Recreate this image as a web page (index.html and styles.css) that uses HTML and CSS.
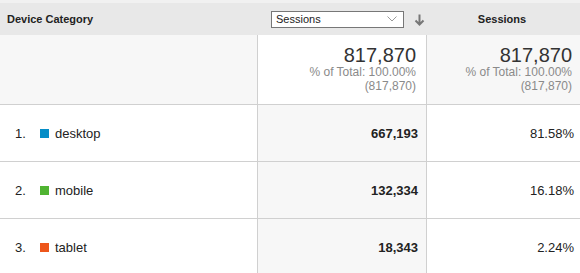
FILE: index.html
```html
<!DOCTYPE html>
<html>
<head>
<meta charset="utf-8">
<link rel="stylesheet" href="styles.css">
</head>
<body>
<div class="table">
  <div class="row head">
    <div class="cell c1"><span class="hlabel">Device Category</span></div>
    <div class="cell c2">
      <div class="select"><span>Sessions</span>
        <svg class="chev" width="10" height="6" viewBox="0 0 10 6"><polyline points="0.5,0.5 5,5 9.5,0.5" fill="none" stroke="#9a9a9a" stroke-width="1"/></svg>
      </div>
      <svg class="sortarrow" width="11" height="12" viewBox="0 0 11 12"><path d="M5.5 0.5 V10.5 M1.5 6.5 L5.5 10.5 L9.5 6.5" fill="none" stroke="#777" stroke-width="2"/></svg>
    </div>
    <div class="cell c3"><span class="hlabel">Sessions</span></div>
  </div>
  <div class="row total">
    <div class="cell c1"></div>
    <div class="cell c2">
      <div class="big">817,870</div>
      <div class="small">% of Total: 100.00%</div>
      <div class="small">(817,870)</div>
    </div>
    <div class="cell c3">
      <div class="big">817,870</div>
      <div class="small">% of Total: 100.00%</div>
      <div class="small">(817,870)</div>
    </div>
  </div>
  <div class="row data">
    <div class="cell c1"><span class="idx">1.</span><span class="sw sw-desktop"></span><span class="name">desktop</span></div>
    <div class="cell c2"><b>667,193</b></div>
    <div class="cell c3">81.58%</div>
  </div>
  <div class="row data">
    <div class="cell c1"><span class="idx">2.</span><span class="sw sw-mobile"></span><span class="name">mobile</span></div>
    <div class="cell c2"><b>132,334</b></div>
    <div class="cell c3">16.18%</div>
  </div>
  <div class="row data">
    <div class="cell c1"><span class="idx">3.</span><span class="sw sw-tablet"></span><span class="name">tablet</span></div>
    <div class="cell c2"><b>18,343</b></div>
    <div class="cell c3">2.24%</div>
  </div>
</div>
</body>
</html>
```
FILE: styles.css
```css
html, body {
  margin: 0;
  padding: 0;
  background: #fff;
}
body {
  font-family: "Liberation Sans", Arial, sans-serif;
  color: #222;
}
.table {
  width: 580px;
  border-top: 3px solid #f1f1f1;
}
.row {
  display: grid;
  grid-template-columns: 258px 169px 1fr;
  box-sizing: border-box;
}
.cell {
  box-sizing: border-box;
}
.head {
  height: 32px;
  background: #e8e8e8;
  font-size: 11px;
}
.head .cell {
  display: flex;
  align-items: center;
}
.head .c1 {
  padding-left: 7px;
}
.hlabel {
  font-weight: bold;
  color: #222;
}
.head .c2 {
  padding-left: 13px;
}
.head .c3 {
  justify-content: center;
  padding-right: 3px;
}
.select {
  width: 133px;
  height: 17px;
  box-sizing: border-box;
  border: 1px solid #777;
  background: #fff;
  display: flex;
  align-items: center;
  justify-content: space-between;
  padding: 0 6px 0 4px;
  font-size: 11px;
  color: #222;
}
.chev {
  display: block;
}
.sortarrow {
  display: block;
  margin-left: 10px;
  margin-top: 1px;
}
.total {
  height: 70px;
  border-bottom: 1px solid #d0d0d0;
}
.total .cell {
  text-align: right;
  padding-top: 10px;
}
.total .c1 {
  background: #f7f7f7;
  border-right: 1px solid #d0d0d0;
}
.total .c2 {
  background: #fff;
  border-right: 1px solid #d0d0d0;
  padding-right: 10px;
}
.total .c3 {
  background: #f7f7f7;
  padding-right: 8px;
}
.big {
  font-size: 20px;
  line-height: 20px;
  color: #333;
}
.small {
  font-size: 12px;
  line-height: 14px;
  color: #8a8a8a;
}
.data {
  height: 57px;
  border-bottom: 1px solid #d0d0d0;
  font-size: 13px;
}
.data .cell {
  display: flex;
  align-items: center;
}
.data .c1 {
  border-right: 1px solid #d0d0d0;
  padding-left: 15px;
}
.data .c2 {
  background: #f7f7f7;
  border-right: 1px solid #d0d0d0;
  justify-content: flex-end;
  padding-right: 8px;
}
.data .c3 {
  justify-content: flex-end;
  padding-right: 6px;
  color: #222;
}
.idx {
  width: 25px;
}
.sw {
  width: 9px;
  height: 9px;
  margin-right: 6px;
}
.sw-desktop { background: #058dc7; }
.sw-mobile { background: #50b432; }
.sw-tablet { background: #ed561b; }
b {
  font-weight: bold;
}
```
